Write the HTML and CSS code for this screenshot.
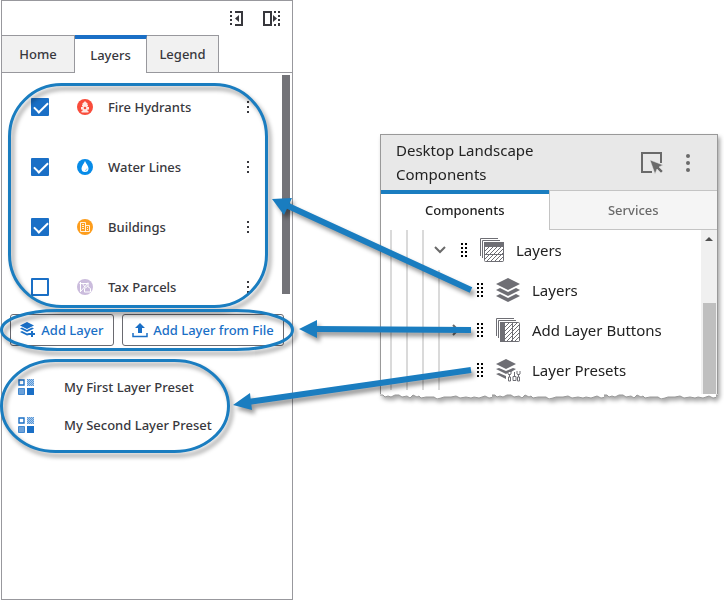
FILE: index.html
```html
<!doctype html>
<html lang="en">
  <head>
    <meta charset="UTF-8" />
    <meta name="viewport" content="width=device-width, initial-scale=1.0" />
    <title>Layer Components</title>
    <link rel="stylesheet" href="styles.css">
  </head>
  <body>
    <!-- shared icons -->
    <svg class="symbols" aria-hidden="true">
      <symbol id="kebab" viewBox="0 0 4 16">
        <rect x="1" y="2" width="2" height="2" />
        <rect x="1" y="7" width="2" height="2" />
        <rect x="1" y="12" width="2" height="2" />
      </symbol>
      <symbol id="preset" viewBox="0 0 16 16">
        <path fill="#fff" stroke="#1a6fc6" d="M1 1h5v5H1z" stroke-width="1.400" />
        <path fill="#a9caec" d="M9 0h7v7H9z" />
        <path fill="none" stroke="#5a98d8" stroke-dasharray="1 1" d="M9 .5h7M10 1.500h6M9 2.500h7M10 3.500h6M9 4.500h7M10 5.500h6M9 6.500h7" />
        <path fill="#6ba1da" stroke="#4288cf" d="M.5 9.500h6v6h-6z" />
        <path fill="#1a6fc6" d="M9 9h7v7H9z" />
      </symbol>
      <symbol id="grip" viewBox="0 0 8 16">
        <path d="M1 1h2v2H1zM5 1h2v2H5zM1 5h2v2H1zM5 5h2v2H5zM1 9h2v2H1zM5 9h2v2H5zM1 13h2v2H1zM5 13h2v2H5z" />
      </symbol>
      <pattern id="hatch" width="4" height="4" patternUnits="userSpaceOnUse">
        <rect width="4" height="4" fill="#fff" />
        <path d="M-1 1l2-2M0 4l4-4M3 5l2-2" stroke="#6e6e74" />
      </pattern>
    </svg>

    <div class="sidebar">
      <div class="sidebar-header">
        <button class="icon-button" aria-label="Collapse panel">
          <svg width="13" height="17" viewBox="0 0 13 17">
            <path d="M1 1v16" stroke="#38383d" stroke-width="2" stroke-dasharray="2 2" />
            <path d="M5 2h7v13H5" fill="none" stroke="#38383d" stroke-width="2" />
            <path d="M9 5v7L5 8.500z" fill="#38383d" />
          </svg>
        </button>
        <button class="icon-button" aria-label="Expand panel">
          <svg width="17" height="17" viewBox="0 0 17 17">
            <path d="M1 2h7v13H1z" fill="none" stroke="#38383d" stroke-width="2" />
            <path d="M10 5v7l4-3.500z" fill="#38383d" />
            <path d="M11 2h6M11 15h6M16 5v9" stroke="#38383d" stroke-width="2" stroke-dasharray="2 2" />
          </svg>
        </button>
      </div>
      <div class="tabs">
        <button class="tab">Home</button>
        <button class="tab active">Layers</button>
        <button class="tab">Legend</button>
      </div>

      <div class="layer-list">
        <div class="layers">
          <div class="layer">
            <input type="checkbox" id="hydrants" checked />
            <svg class="layer-icon" viewBox="0 0 16 16">
              <circle cx="8" cy="8" r="8" fill="#f94c3b" />
              <path fill="#ffe9e5" d="M8 2l1 1.200 1.500 1V6h.5v1h-.5v1H12v2.500h-1.500V12h1v1.500h-7V12h1v-1.500H4V8h1.500V7H5V6h.5V4.200L7 3.200z" />
              <circle cx="8" cy="9" r="1.300" fill="#f94c3b" />
            </svg>
            <label for="hydrants">Fire Hydrants</label>
            <button class="icon-button" aria-label="Fire Hydrants actions"><svg width="4" height="16"><use href="#kebab" /></svg></button>
          </div>
          <div class="layer">
            <input type="checkbox" id="water" checked />
            <svg class="layer-icon" viewBox="0 0 16 16">
              <circle cx="8" cy="8" r="8" fill="#078be8" />
              <path fill="#fff" d="M8 2c1 2.500 3.500 5 3.500 7.500a3.500 3.500 0 0 1-7 0C4.500 7 7 4.500 8 2z" />
              <path fill="none" stroke="#8ccaf5" d="M10 9.500A2 2 0 0 1 8 11.500" />
            </svg>
            <label for="water">Water Lines</label>
            <button class="icon-button" aria-label="Water Lines actions"><svg width="4" height="16"><use href="#kebab" /></svg></button>
          </div>
          <div class="layer">
            <input type="checkbox" id="buildings" checked />
            <svg class="layer-icon" viewBox="0 0 16 16">
              <circle cx="8" cy="8" r="8" fill="#fd9d1c" />
              <path fill="none" stroke="#fff" stroke-opacity=".85" d="M3.500 12.500v-9h5v9M8.500 6.500h4v6h-9M5 5.500h2M5 7.500h2M5 9.500h2M10 8.500h1M10 10.500h1" />
            </svg>
            <label for="buildings">Buildings</label>
            <button class="icon-button" aria-label="Buildings actions"><svg width="4" height="16"><use href="#kebab" /></svg></button>
          </div>
          <div class="layer">
            <input type="checkbox" id="parcels" />
            <svg class="layer-icon" viewBox="0 0 16 16">
              <circle cx="8" cy="8" r="8" fill="#cbbcdd" />
              <path fill="none" stroke="#fff" d="M2.500 4.500h9M3.500 3v10M4 12l7-8M5 4l3 4M11 3.500V8" />
              <path fill="#cbbcdd" stroke="#fff" d="M7.500 9.500l3-2 3 2v3.500h-6z" />
            </svg>
            <label for="parcels">Tax Parcels</label>
            <button class="icon-button" aria-label="Tax Parcels actions"><svg width="4" height="16"><use href="#kebab" /></svg></button>
          </div>
        </div>
        <div class="list-scroll"></div>
      </div>

      <div class="layer-actions">
        <button class="action">
          <svg width="16" height="16" viewBox="0 0 16 16">
            <path d="M7 0l7 3.500L7 7 0 3.500z" />
            <path d="M0 6.500l2-1 5 2.500 5-2.500 2 1L7 10z" />
            <path d="M0 10l2-1 5 2.500 2-.5v2L7 13.500z" />
            <path d="M12 9v6M9 12h6" stroke="#1a6fc6" stroke-width="2" />
          </svg>
          Add Layer
        </button>
        <button class="action">
          <svg width="16" height="16" viewBox="0 0 16 16">
            <path d="M8 1l5 5h-3v5H6V6H3z" />
            <path d="M1 11v3.500h14V11" fill="none" stroke="#1a6fc6" stroke-width="1.500" />
          </svg>
          Add Layer from File
        </button>
      </div>

      <div class="presets">
        <a class="preset" href="#"><svg width="16" height="16"><use href="#preset" /></svg>My First Layer Preset</a>
        <a class="preset" href="#"><svg width="16" height="16"><use href="#preset" /></svg>My Second Layer Preset</a>
      </div>
    </div>

    <div class="designer">
      <div class="designer-header">
        <h2>Desktop Landscape Components</h2>
        <button class="icon-button" aria-label="Select component">
          <svg width="24" height="24" viewBox="0 0 24 24">
            <path d="M12 21H2V2h19v10" fill="none" stroke="#6a6a6a" stroke-width="2" />
            <path d="M10 9l13 5-4 2 4 4-2 2-4-4-2 5z" fill="#6a6a6a" stroke="#e8e8e8" stroke-width=".5" />
          </svg>
        </button>
        <button class="icon-button" aria-label="More">
          <svg width="4" height="18" fill="#6a6a6a">
            <circle cx="2" cy="2" r="2" />
            <circle cx="2" cy="9" r="2" />
            <circle cx="2" cy="16" r="2" />
          </svg>
        </button>
      </div>
      <div class="designer-tabs">
        <button class="designer-tab active">Components</button>
        <button class="designer-tab">Services</button>
      </div>
      <div class="designer-body">
        <div class="tree">
          <div class="node">
            <span class="guides"><i></i><i></i><i></i></span>
            <svg class="chevron" viewBox="0 0 20 20"><path d="M5 7l5 5 5-5" /></svg>
            <svg class="grip" width="8" height="16"><use href="#grip" /></svg>
            <svg class="node-icon" viewBox="0 0 26 26">
              <path d="M1.500 19V1.500H19M3.500 21V3.500H21" fill="none" stroke="#6e6e74" />
              <rect x="5.500" y="5.500" width="19" height="19" rx="1" fill="url(#hatch)" stroke="#6e6e74" />
              <path d="M5 5h20v5H5z" fill="#6e6e74" />
              <path d="M5 17.500h20" stroke="#6e6e74" />
            </svg>
            <span>Layers</span>
          </div>
          <div class="node">
            <span class="guides"><i></i><i></i><i></i><i></i></span>
            <span class="chevron"></span>
            <svg class="grip" width="8" height="16"><use href="#grip" /></svg>
            <svg class="node-icon" viewBox="0 0 26 26">
              <path d="M13 1l12 6-12 6L1 7z" />
              <path d="M1 13l4-2 8 4 8-4 4 2-12 6z" />
              <path d="M1 19l4-2 8 4 8-4 4 2-12 6z" />
            </svg>
            <span>Layers</span>
          </div>
          <div class="node">
            <span class="guides"><i></i><i></i><i></i><i></i></span>
            <svg class="chevron" viewBox="0 0 20 20"><path d="M7 5l5 5-5 5" /></svg>
            <svg class="grip" width="8" height="16"><use href="#grip" /></svg>
            <svg class="node-icon" viewBox="0 0 26 26">
              <path d="M1.500 19V1.500H19M3.500 21V3.500H21" fill="none" stroke="#6e6e74" />
              <rect x="5.500" y="5.500" width="19" height="19" rx="1" fill="url(#hatch)" stroke="#6e6e74" />
              <path d="M5 5h5v20H5z" fill="#6e6e74" />
              <path d="M17.500 5v20" stroke="#6e6e74" />
            </svg>
            <span>Add Layer Buttons</span>
          </div>
          <div class="node">
            <span class="guides"><i></i><i></i><i></i><i></i></span>
            <span class="chevron"></span>
            <svg class="grip" width="8" height="16"><use href="#grip" /></svg>
            <svg class="node-icon" viewBox="0 0 26 26">
              <path d="M11 2l10 5-10 5L1 7z" />
              <path d="M1 12l3-1 7 3 7-3 3 1-5 3h-2l-3 2z" />
              <path d="M1 17l3-1 7 3v3z" />
              <path d="M14.500 17v7M19.500 15v6M23.500 17v7" stroke="#6e6e74" fill="none" />
              <path d="M13 14v3l1.500 1 1.500-1v-3M22 14v3l1.500 1 1.500-1v-3" stroke="#6e6e74" fill="none" />
              <path d="M18 19.500h3v4h-3zM13.500 20h2v4h-2zM22.500 20h2v4h-2z" stroke="#6e6e74" fill="#fff" />
            </svg>
            <span>Layer Presets</span>
          </div>
        </div>
        <div class="tree-scroll">
          <svg width="16" height="18"><path d="M4 11l4-4 4 4z" fill="#505050" /></svg>
          <div class="tree-thumb"></div>
        </div>
      </div>
      <svg class="torn" height="5">
        <pattern id="tear" width="112" height="5" patternUnits="userSpaceOnUse">
          <path d="M-2-1V1L3 1l2 2 3-1 3 1 4-2 4 0 3 2 5-1 3 2 3-3 4 2 2-1 2 2 5-1 8 0 3 2 4-1 3-1 7 0 5-1 4 2 6-1 5 1 3-1 5 1 6-2 4 2 5-1V-1z" fill="#fff" stroke="#999" />
        </pattern>
        <rect width="100%" height="5" fill="url(#tear)" />
      </svg>
    </div>

    <!-- callouts linking each component to where it shows up -->
    <svg class="callouts" width="724" height="600" aria-hidden="true">
      <g fill="none" stroke="#1a7dc0" stroke-width="3">
        <rect x="9.500" y="84.500" width="257" height="222" rx="52" />
        <rect x="1.500" y="310.500" width="291" height="39" rx="56" ry="19.500" />
        <rect x="1.500" y="360.500" width="227" height="91" rx="54" ry="45.500" />
      </g>
      <g fill="#1a7dc0" stroke="#1a7dc0" stroke-width="6">
        <path d="M471 290L286 205M471 330L314 329M471 370L248 402" />
        <path d="M272 199l20-1-8 17zM299 329l18-9v18zM233 405l17-12 2 17z" stroke="none" />
      </g>
    </svg>
  </body>
</html>
```

FILE: styles.css
```css
* {
  box-sizing: border-box;
}
body {
  margin: 0;
  display: flex;
  align-items: flex-start;
  position: relative;
  min-height: 100vh;
  padding: 0 6px 0 1px;
  background-color: #fff;
  color: #38383d;
  font-family: "Noto Sans", "Open Sans", sans-serif;
  font-size: 13px;
  font-weight: 500;
}
button {
  margin: 0;
  padding: 0;
  border: none;
  background: none;
  color: inherit;
  font: inherit;
  cursor: pointer;
}
svg {
  flex: none;
}
.symbols {
  position: absolute;
  width: 0;
  height: 0;
}
.icon-button {
  display: flex;
}

/* runtime sidebar */
.sidebar {
  flex: none;
  width: 292px;
  min-height: 100vh;
  border: 1px solid #98989d;
}
.sidebar-header {
  display: flex;
  justify-content: flex-end;
  align-items: center;
  gap: 20px;
  height: 34px;
  padding-right: 12px;
}
.tabs {
  display: flex;
  height: 38px;
  border-bottom: 1px solid #98989d;
}
.tab {
  width: 72px;
  height: 37px;
  border: 1px solid #98989d;
  border-width: 1px 1px 0 0;
  background-color: #f1f1f1;
}
.tab:first-child {
  width: 73px;
}
.tab.active {
  height: 38px;
  padding-bottom: 2px;
  border-top: 4px solid #1a6fc6;
  background-color: #fff;
}
.layer-list {
  display: flex;
  height: 228px;
  overflow: hidden;
}
.layers {
  flex: 1;
  padding-top: 4px;
}
.layer {
  display: flex;
  align-items: center;
  height: 60px;
  padding: 0 32px 0 29px;
}
.layer input {
  appearance: none;
  position: relative;
  width: 18px;
  height: 18px;
  margin: 0;
  border: 2px solid #1a6fc6;
  border-radius: 1px;
}
.layer input:checked {
  background-color: #1a6fc6;
}
.layer input:checked::after {
  content: "";
  position: absolute;
  left: 1px;
  top: 2px;
  width: 12px;
  height: 6px;
  border: solid #fff;
  border-width: 0 0 2px 2px;
  transform: rotate(-45deg);
}
.layer-icon {
  width: 16px;
  height: 16px;
  margin: 0 15px 0 28px;
}
.layer label {
  flex: 1;
}
.layer .icon-button {
  fill: #38383d;
}
.list-scroll {
  width: 8px;
  height: 219px;
  margin: 2px 2px 0 0;
  background-color: #737378;
}
.layer-actions {
  display: flex;
  gap: 8px;
  padding: 13px 8px 0;
}
.action {
  display: flex;
  flex: auto;
  align-items: center;
  justify-content: center;
  gap: 5px;
  height: 32px;
  border: 1px solid #6a6a70;
  border-radius: 3px;
  color: #1a6fc6;
  fill: #1a6fc6;
  white-space: nowrap;
}
.presets {
  padding-top: 22px;
}
.preset {
  display: flex;
  align-items: center;
  gap: 30px;
  height: 38px;
  padding-left: 16px;
  color: inherit;
  text-decoration: none;
}

/* designer panel */
.designer {
  flex: 1;
  margin: 134px 0 0 87px;
  filter: drop-shadow(2px 3px 2px rgba(0, 0, 0, 0.35));
}
.designer-header {
  display: flex;
  align-items: center;
  gap: 22px;
  height: 56px;
  padding: 0 27px 0 15px;
  border: 1px solid #999;
  border-bottom: none;
  background-color: #e8e8e8;
  color: #222;
}
.designer-header h2 {
  flex: 1;
  margin: 0;
  padding: 0 60px 2px 0;
  font-size: 15px;
  font-weight: 400;
  line-height: 24px;
}
.designer-tabs {
  display: flex;
  height: 40px;
  border: 1px solid #999;
  border-width: 0 1px;
  background-color: #fff;
}
.designer-tab {
  flex: 1;
  border: 1px solid #c4c4c4;
  border-right: none;
  background-color: #f5f5f5;
  color: #6a6a6a;
}
.designer-tab.active {
  padding-bottom: 4px;
  border: none;
  border-top: 4px solid #1a7dc0;
  background-color: #fff;
  color: #222;
}
.designer-body {
  display: flex;
  border: 1px solid #999;
  border-width: 0 1px;
  background-color: #fff;
}
.tree {
  flex: 1;
  height: 164px;
  color: #222;
  font-size: 15px;
  font-weight: 400;
}
.node {
  display: flex;
  align-items: center;
  height: 40px;
  padding-left: 9px;
}
.guides {
  display: flex;
  align-self: stretch;
  gap: 14px;
  margin-right: 6px;
}
.guides i {
  width: 2px;
  background-color: #dadada;
}
.chevron {
  width: 20px;
  height: 20px;
  fill: none;
  stroke: #6a6a6a;
  stroke-width: 2;
}
.grip {
  margin: 0 11px 0 10px;
}
.node-icon {
  width: 26px;
  height: 26px;
  margin-right: 11px;
  fill: #6e6e74;
}
.tree-scroll {
  display: flex;
  flex-direction: column;
  width: 16px;
  background-color: #f0f0f0;
}
.tree-thumb {
  flex: 1;
  margin: 55px 1px 0 2px;
  background-color: #bfbfbf;
}
.torn {
  display: block;
  width: 100%;
}

/* sits over both panels */
.callouts {
  position: absolute;
  top: 0;
  left: 0;
  filter: drop-shadow(3px 4px 2px rgba(0, 0, 0, 0.4));
  pointer-events: none;
}
```
